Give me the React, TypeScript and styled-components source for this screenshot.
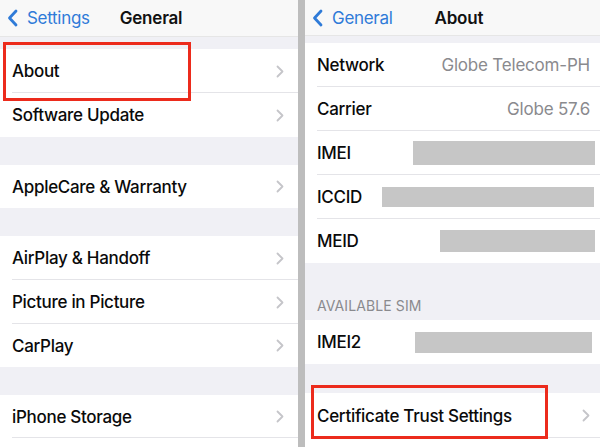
import React from 'react';
import styled, { createGlobalStyle } from 'styled-components';

const GlobalStyle = createGlobalStyle`
  html, body {
    margin: 0;
    padding: 0;
    background: #ffffff;
  }
  body {
    font-family: Inter, "Liberation Sans", Arial, sans-serif;
    -webkit-font-smoothing: antialiased;
  }
`;

const Screen = styled.div`
  display: flex;
  width: 600px;
  height: 447px;
  overflow: hidden;
  background: #f0f0f5;
`;

const Panel = styled.div<{ $width: number }>`
  position: relative;
  display: flex;
  flex-direction: column;
  width: ${p => p.$width}px;
  flex-shrink: 0;
  background: #f0f0f5;
  overflow: hidden;
`;

const Divider = styled.div`
  width: 7px;
  flex-shrink: 0;
  background: #bdbdbd;
`;

const NavBar = styled.div<{ $height: number; $gap: number }>`
  display: flex;
  align-items: center;
  height: ${p => p.$height}px;
  padding-left: 7px;
  background: #f8f8f8;
  border-bottom: 1px solid #e6e6e6;
  box-sizing: border-box;
  flex-shrink: 0;
  gap: ${p => p.$gap}px;
`;

const BackButton = styled.div`
  display: flex;
  align-items: center;
  gap: 9px;
  color: #2f7bd8;
  font-size: 17px;
  letter-spacing: -0.3px;
`;

const NavTitle = styled.div`
  font-size: 17px;
  font-weight: 600;
  color: #111111;
  letter-spacing: -0.2px;
`;

const Gap = styled.div<{ $h: number }>`
  height: ${p => p.$h}px;
  flex-shrink: 0;
`;

const Group = styled.div`
  background: #ffffff;
  flex-shrink: 0;
`;

const Row = styled.div<{ $h: number; $padRight: number; $last?: boolean }>`
  position: relative;
  display: flex;
  align-items: center;
  height: ${p => p.$h}px;
  padding-left: 12px;
  padding-right: ${p => p.$padRight}px;
  box-sizing: border-box;

  &::after {
    content: '';
    display: ${p => (p.$last ? 'none' : 'block')};
    position: absolute;
    left: 12px;
    right: 0;
    bottom: 0;
    height: 1px;
    background: #e4e4e8;
  }
`;

const Label = styled.div`
  flex: 1;
  font-size: 17px;
  font-weight: 500;
  color: #0a0a0a;
  letter-spacing: -0.3px;
  white-space: nowrap;
`;

const Value = styled.div`
  font-size: 17px;
  color: #8a8a8e;
  letter-spacing: -0.2px;
  white-space: nowrap;
`;

const Redacted = styled.div<{ $w: number; $h: number }>`
  width: ${p => p.$w}px;
  height: ${p => p.$h}px;
  background: #c6c6c6;
`;

const SectionHeader = styled.div`
  display: flex;
  align-items: flex-end;
  height: 57px;
  padding: 0 0 6px 12px;
  box-sizing: border-box;
  font-size: 14px;
  color: #8a8a8e;
  letter-spacing: 0.1px;
  flex-shrink: 0;
`;

const Highlight = styled.div<{ $x: number; $y: number; $w: number; $h: number }>`
  position: absolute;
  left: ${p => p.$x}px;
  top: ${p => p.$y}px;
  width: ${p => p.$w}px;
  height: ${p => p.$h}px;
  border: 3px solid #ec2b1c;
  box-sizing: border-box;
  pointer-events: none;
`;

const BackChevron = () => (
  <svg width="11" height="18" viewBox="0 0 11 18">
    <path d="M9 2 L2.5 9 L9 16" fill="none" stroke="#2f7bd8" strokeWidth="2.8" strokeLinecap="round" strokeLinejoin="round" />
  </svg>
);

const Chevron = () => (
  <svg width="8" height="13" viewBox="0 0 8 13">
    <path d="M1.5 1.5 L6.5 6.5 L1.5 11.5" fill="none" stroke="#c5c5c9" strokeWidth="1.8" strokeLinecap="round" strokeLinejoin="round" />
  </svg>
);

const LeftRow = ({ label, h = 44, last }: { label: string; h?: number; last?: boolean }) => (
  <Row $h={h} $padRight={14} $last={last}>
    <Label>{label}</Label>
    {label && <Chevron />}
  </Row>
);

const InfoRow = ({ label, children, last }: { label: string; children: React.ReactNode; last?: boolean }) => (
  <Row $h={44} $padRight={10} $last={last}>
    <Label>{label}</Label>
    {children}
  </Row>
);

export default function App() {
  return (
    <>
      <GlobalStyle />
      <Screen>
        <Panel $width={298}>
          <NavBar $height={37} $gap={30}>
            <BackButton>
              <BackChevron />
              Settings
            </BackButton>
            <NavTitle>General</NavTitle>
          </NavBar>
          <Gap $h={12} />
          <Group>
            <LeftRow label="About" />
            <LeftRow label="Software Update" last />
          </Group>
          <Gap $h={28} />
          <Group>
            <LeftRow label="AppleCare & Warranty" h={43} last />
          </Group>
          <Gap $h={28} />
          <Group>
            <LeftRow label="AirPlay & Handoff" />
            <LeftRow label="Picture in Picture" />
            <LeftRow label="CarPlay" h={43} last />
          </Group>
          <Gap $h={28} />
          <Group>
            <LeftRow label="iPhone Storage" h={43} />
            <LeftRow label="" last />
          </Group>
          <Highlight $x={3} $y={42} $w={188} $h={59} />
        </Panel>
        <Divider />
        <Panel $width={295}>
          <NavBar $height={36} $gap={42}>
            <BackButton>
              <BackChevron />
              General
            </BackButton>
            <NavTitle>About</NavTitle>
          </NavBar>
          <Gap $h={7} />
          <Group>
            <InfoRow label="Network">
              <Value>Globe Telecom-PH</Value>
            </InfoRow>
            <InfoRow label="Carrier">
              <Value>Globe 57.6</Value>
            </InfoRow>
            <InfoRow label="IMEI">
              <Redacted $w={182} $h={24} style={{ marginRight: -5 }} />
            </InfoRow>
            <InfoRow label="ICCID">
              <Redacted $w={212} $h={20} style={{ marginRight: -4 }} />
            </InfoRow>
            <InfoRow label="MEID" last>
              <Redacted $w={155} $h={22} style={{ marginRight: -5 }} />
            </InfoRow>
          </Group>
          <SectionHeader>AVAILABLE SIM</SectionHeader>
          <Group>
            <InfoRow label="IMEI2" last>
              <Redacted $w={177} $h={21} style={{ marginRight: -2 }} />
            </InfoRow>
          </Group>
          <Gap $h={29} />
          <Group>
            <Row $h={45} $padRight={10}>
              <Label>Certificate Trust Settings</Label>
              <Chevron />
            </Row>
            <Row $h={44} $padRight={10} $last>
              <Label />
            </Row>
          </Group>
          <Highlight $x={6} $y={385} $w={237} $h={54} />
        </Panel>
      </Screen>
    </>
  );
}
